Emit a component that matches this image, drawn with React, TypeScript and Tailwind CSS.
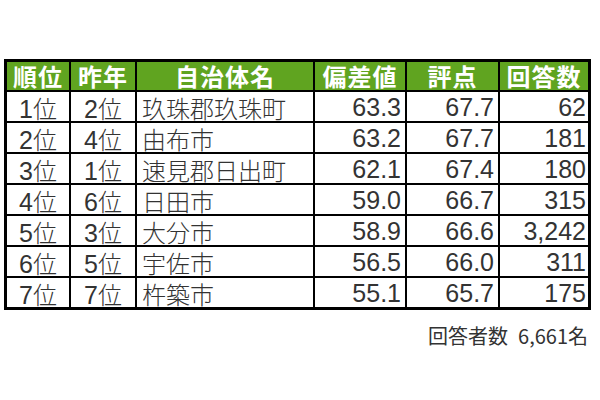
import React from 'react'

type Row = {
  rank: string
  prev: string
  name: string
  score: string
  point: string
  count: string
}

const rows: Row[] = [
  { rank: '1', prev: '2', name: '玖珠郡玖珠町', score: '63.3', point: '67.7', count: '62' },
  { rank: '2', prev: '4', name: '由布市', score: '63.2', point: '67.7', count: '181' },
  { rank: '3', prev: '1', name: '速見郡日出町', score: '62.1', point: '67.4', count: '180' },
  { rank: '4', prev: '6', name: '日田市', score: '59.0', point: '66.7', count: '315' },
  { rank: '5', prev: '3', name: '大分市', score: '58.9', point: '66.6', count: '3,242' },
  { rank: '6', prev: '5', name: '宇佐市', score: '56.5', point: '66.0', count: '311' },
  { rank: '7', prev: '7', name: '杵築市', score: '55.1', point: '65.7', count: '175' },
]

const headers = ['順位', '昨年', '自治体名', '偏差値', '評点', '回答数']

const cjk = { fontFamily: '"Noto Sans CJK JP", "Noto Sans", sans-serif' }
const latin = { fontFamily: '"Liberation Sans", Arial, sans-serif' }

const cell =
  'bg-white text-[#333] font-light text-[24px] leading-[27px] pt-[2px] flex items-baseline whitespace-nowrap'
const num = 'text-[25px] leading-[27px]'

function Place({ n }: { n: string }) {
  return (
    <div className={`${cell} justify-center`}>
      <span className={num} style={latin}>{n}</span>
      <span>位</span>
    </div>
  )
}

function Num({ v, pr }: { v: string; pr: string }) {
  return (
    <div className={`${cell} justify-end ${pr}`}>
      <span className={num} style={latin}>{v}</span>
    </div>
  )
}

export default function App() {
  return (
    <div className="w-[600px] h-[400px] bg-white" style={cjk}>
      <div className="pt-[59px] pl-[4px]">
        <div className="w-[587px] border-[3px] border-black bg-black grid grid-cols-[62px_64px_176px_90px_91px_88px] grid-rows-[28px_repeat(7,29px)] gap-[2px]">
          {headers.map((h) => (
            <div
              key={h}
              className="bg-[#60a420] text-white font-bold text-[24px] leading-[28px] text-center tracking-[1px] whitespace-nowrap"
            >
              {h}
            </div>
          ))}
          {rows.map((r) => (
            <React.Fragment key={r.rank}>
              <Place n={r.rank} />
              <Place n={r.prev} />
              <div className={`${cell} justify-start pl-[5px]`}>{r.name}</div>
              <Num v={r.score} pr="pr-[4px]" />
              <Num v={r.point} pr="pr-[4px]" />
              <Num v={r.count} pr="pr-[2px]" />
            </React.Fragment>
          ))}
        </div>
        <div className="w-[584px] flex justify-end gap-[10px] mt-[14px] text-[20px] leading-[24px] text-[#333]">
          <span>回答者数</span>
          <span>6,661名</span>
        </div>
      </div>
    </div>
  )
}
